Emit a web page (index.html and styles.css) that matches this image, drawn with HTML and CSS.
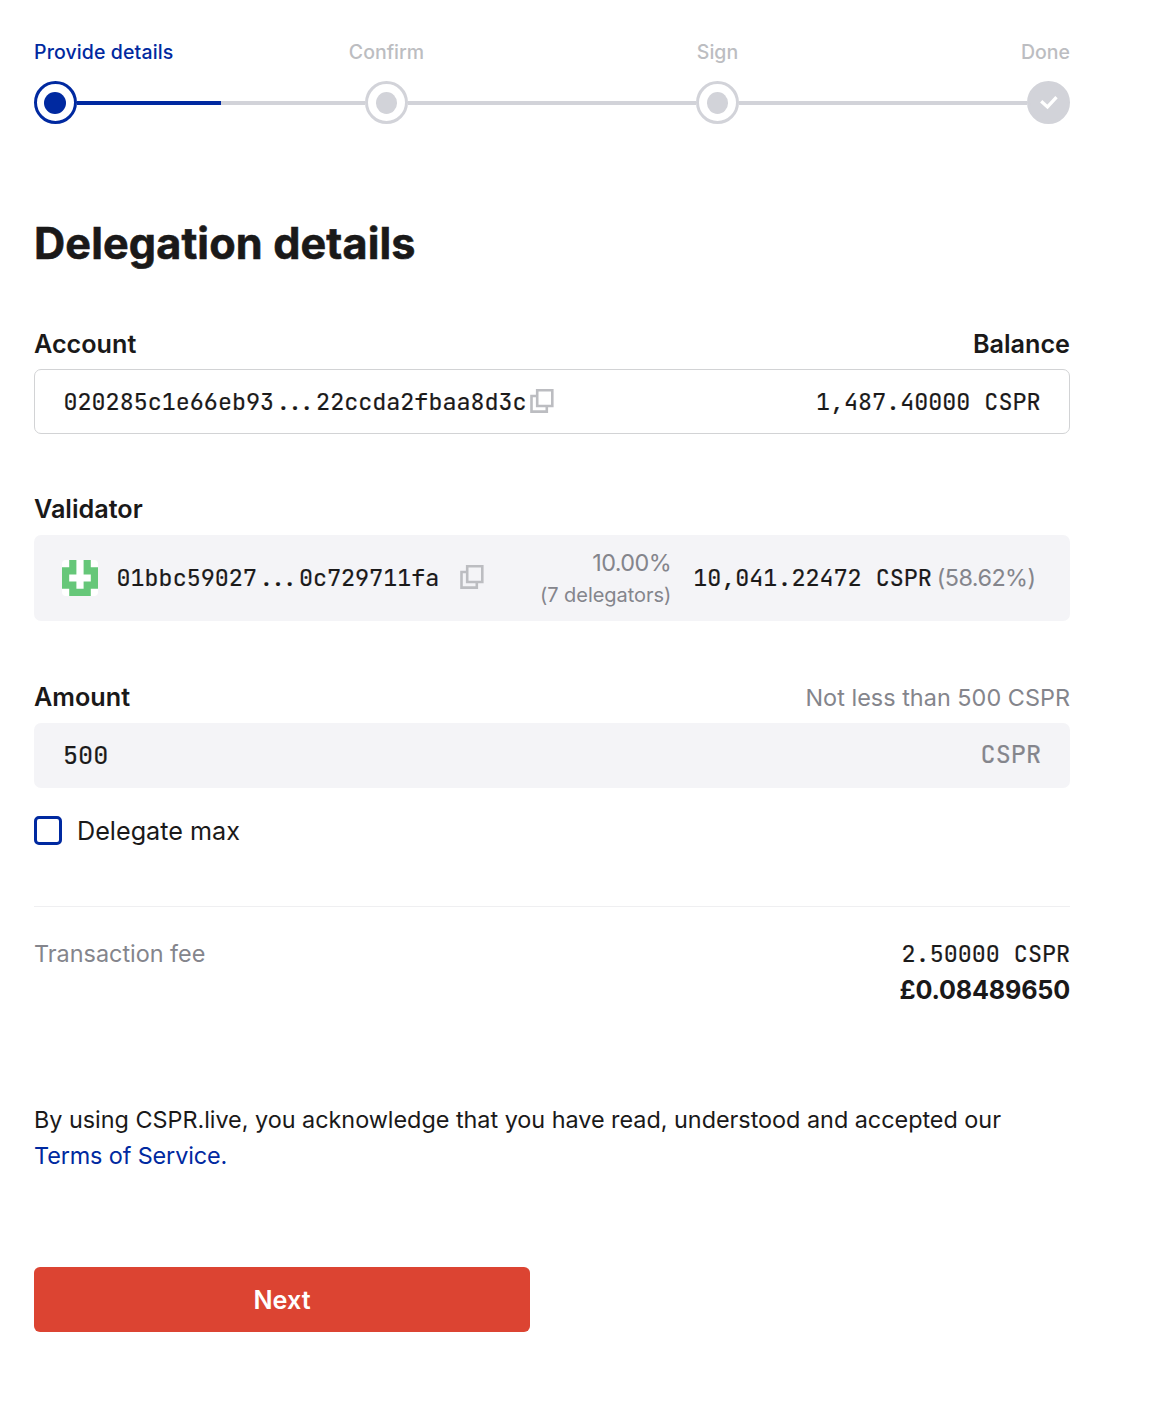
FILE: index.html
```html
<!DOCTYPE html>
<html lang="en">
<head>
<meta charset="utf-8">
<title>Delegation details</title>
<link rel="stylesheet" href="styles.css">
</head>
<body>
<main class="page">
  <div class="step-labels">
    <span class="step-label active">Provide details</span>
    <span class="step-label">Confirm</span>
    <span class="step-label">Sign</span>
    <span class="step-label">Done</span>
  </div>
  <div class="stepper">
    <span class="dot active"></span>
    <span class="bar half"></span>
    <span class="dot"></span>
    <span class="bar"></span>
    <span class="dot"></span>
    <span class="bar"></span>
    <span class="dot done"><svg width="19" height="15" viewBox="0 0 19 15"><path d="M2.2 6.2 8.5 11.9 17.5 2.2" fill="none" stroke="#fff" stroke-width="3.3"/></svg></span>
  </div>

  <h1 class="title">Delegation details</h1>

  <section class="field account">
    <div class="field-head"><h2 class="label">Account</h2><h2 class="label">Balance</h2></div>
    <div class="box outlined">
      <span class="mono">020285c1e66eb93...22ccda2fbaa8d3c</span>
      <svg class="copy" width="24" height="24" viewBox="0 0 24 24"><path d="M7.2 1.2H22.3V17H7.2ZM7.2 7H1.5V22.6H16.8V17" fill="none" stroke="#bcbdc1" stroke-width="2.6"/></svg>
      <span class="mono push">1,487.40000 CSPR</span>
    </div>
  </section>

  <section class="field validator">
    <div class="field-head"><h2 class="label">Validator</h2></div>
    <div class="box filled tall">
      <svg class="avatar" width="36" height="36" viewBox="0 0 5 5"><path fill="#fff" d="M0 0H5V5H0Z"/><path fill="#66c779" d="M1 0H2V2H1V3H2V4H3V3H4V2H3V0H4V1H5V4H4V5H1V4H0V1H1Z"/></svg>
      <span class="mono">01bbc59027...0c729711fa</span>
      <svg class="copy spaced" width="24" height="24" viewBox="0 0 24 24"><path d="M7.2 1.2H22.3V17H7.2ZM7.2 7H1.5V22.6H16.8V17" fill="none" stroke="#bcbdc1" stroke-width="2.6"/></svg>
      <div class="rate push"><span class="rate-value">10.00%</span><span class="rate-note">(7 delegators)</span></div>
      <span class="mono stake">10,041.22472 CSPR</span>
      <span class="share">(58.62%)</span>
    </div>
  </section>

  <section class="field amount">
    <div class="field-head"><h2 class="label">Amount</h2><span class="hint">Not less than 500 CSPR</span></div>
    <div class="box filled">
      <span class="mono large">500</span>
      <span class="mono large unit push">CSPR</span>
    </div>
    <div class="check-row"><span class="checkbox"></span><span class="check-label">Delegate max</span></div>
  </section>

  <section class="fee">
    <span class="fee-label">Transaction fee</span>
    <div class="fee-values"><span class="mono">2.50000 CSPR</span><strong class="fiat">£0.08489650</strong></div>
  </section>

  <p class="terms">By using CSPR.live, you acknowledge that you have read, understood and accepted our<br><a class="link">Terms of Service.</a></p>

  <button class="next">Next</button>
</main>
</body>
</html>
```
FILE: styles.css
```css
* { box-sizing: border-box; }
body { margin: 0; background: #fff; color: #1a1919; font-family: Inter, sans-serif; font-size: 23.4px; }
.page { width: 1036px; margin-left: 34px; padding-top: 38px; }
.step-labels { display: grid; grid-template-columns: 187px 331px 331px 187px; height: 43px; line-height: 28px; font-size: 19.5px; font-weight: 500; color: #bcbdc1; text-align: center; }
.step-label:first-child { text-align: left; }
.step-label:last-child { text-align: right; }
.step-label.active { color: #0029a0; letter-spacing: 0.12px; }
.stepper { display: flex; align-items: center; height: 43px; }
.dot { flex: none; display: flex; align-items: center; justify-content: center; width: 43px; height: 43px; border: 3px solid #d2d3d9; border-radius: 50%; }
.dot::before { content: ""; width: 21.5px; height: 22px; border-radius: 50%; background: #d2d3d9; }
.dot.active { border-color: #0029a0; }
.dot.active::before { width: 22px; margin-right: 1px; background: #0029a0; }
.dot.done { background: #d2d3d9; }
.dot.done::before { display: none; }
.bar { flex: 1; height: 4px; background: #d2d3d9; }
.bar.half { background: linear-gradient(to right, #0029a0 50%, #d2d3d9 50%); }
.title { margin: 89px 0 0; height: 61px; line-height: 60px; font-size: 43.2px; font-weight: 700; letter-spacing: 0.12px; -webkit-text-stroke: 0.6px #1a1919; }
.field-head { display: flex; justify-content: space-between; height: 36px; line-height: 36px; }
.label { margin: 0; font-size: 25.2px; font-weight: 600; }
.account { margin-top: 52px; }
.validator { margin-top: 57px; }
.amount { margin-top: 58px; }
.hint { padding-top: 1px; letter-spacing: 0.03px; }
.box { display: flex; align-items: center; height: 65px; margin-top: 7px; padding: 0 29px; border-radius: 7px; }
.outlined { border: 1px solid #d2d3d5; padding: 0 28.5px; }
.filled { background: #f4f4f7; }
.amount .box { margin-top: 8px; }
.tall { height: 86px; margin-top: 8px; padding: 0 34.5px 0 28px; }
.mono { font-family: "JetBrains Mono", "DejaVu Sans Mono", monospace; font-size: 23.4px; line-height: 36px; white-space: nowrap; -webkit-text-stroke: 0.2px currentColor; }
.large { margin-bottom: 2px; font-size: 25.2px; }
.unit, .hint, .fee-label, .rate, .share { color: #84858c; }
.unit { margin-bottom: 4px; }
.push { margin-left: auto; }
.copy { flex: none; margin: 0 0 2px 3px; }
.copy.spaced { margin-left: 21px; }
.avatar { flex: none; margin-right: 18.5px; border-radius: 4px; }
.rate { display: flex; flex-direction: column; align-items: flex-end; padding-top: 2px; line-height: 32px; }
.rate-value, .share { letter-spacing: -0.55px; }
.rate-note { font-size: 20px; letter-spacing: -0.05px; }
.stake { margin-left: 22px; }
.share { margin: 0 0 2px 5px; }
.check-row { display: flex; align-items: center; gap: 15px; height: 36px; margin-top: 25px; }
.checkbox { width: 28px; height: 29px; margin-bottom: 1px; border: 3px solid #0029a0; border-radius: 5px; }
.check-label { font-size: 25.2px; }
.fee { display: flex; justify-content: space-between; margin-top: 57px; padding-top: 29px; height: 101px; border-top: 1px solid #efeff1; line-height: 36px; }
.fee-values { display: flex; flex-direction: column; align-items: flex-end; }
.fiat { font-size: 25.2px; font-weight: 650; letter-spacing: -0.2px; }
.terms { margin: 95px 0 0; line-height: 36px; letter-spacing: -0.02px; }
.link { color: #0029a0; letter-spacing: -0.12px; }
.next { display: block; width: 496px; height: 65px; margin-top: 93px; padding: 0; border: 0; border-radius: 6px; background: #dc4432; color: #fff; font: 600 25.2px Inter, sans-serif; }
```
